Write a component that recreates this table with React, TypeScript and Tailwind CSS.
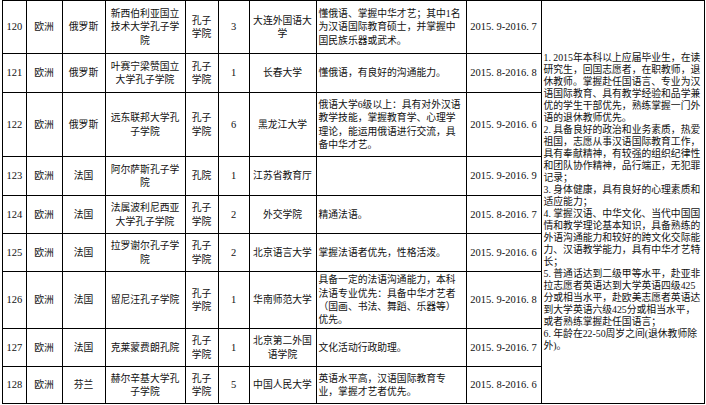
import React from 'react';

type Row = {
    no: string;
    region: string;
    country: string;
    school: string[];
    kind: string[];
    count: string;
    partner: string[];
    req: string[];
    period: string;
    h: string;
};

const rows: Row[] = [
    {
        no: '120', region: '欧洲', country: '俄罗斯',
        school: ['新西伯利亚国立', '技术大学孔子学', '院'], kind: ['孔子', '学院'], count: '3',
        partner: ['大连外国语大', '学'],
        req: ['懂俄语、掌握中华才艺；其中1名', '为汉语国际教育硕士，并掌握中', '国民族乐器或武术。'],
        period: '2015. 9-2016. 7', h: 'h-[53px]',
    },
    {
        no: '121', region: '欧洲', country: '俄罗斯',
        school: ['叶赛宁梁赞国立', '大学孔子学院'], kind: ['孔子', '学院'], count: '1',
        partner: ['长春大学'],
        req: ['懂俄语，有良好的沟通能力。'],
        period: '2015. 8-2016. 8', h: 'h-[39px]',
    },
    {
        no: '122', region: '欧洲', country: '俄罗斯',
        school: ['远东联邦大学孔', '子学院'], kind: ['孔子', '学院'], count: '6',
        partner: ['黑龙江大学'],
        req: ['俄语大学6级以上：具有对外汉语', '教学技能，掌握教育学、心理学', '理论，能运用俄语进行交流，具', '备中华才艺。'],
        period: '2015. 9-2016. 6', h: 'h-[64px]',
    },
    {
        no: '123', region: '欧洲', country: '法国',
        school: ['阿尔萨斯孔子学', '院'], kind: ['孔院'], count: '1',
        partner: ['江苏省教育厅'],
        req: [],
        period: '2015. 9-2016. 9', h: 'h-[39px]',
    },
    {
        no: '124', region: '欧洲', country: '法国',
        school: ['法属波利尼西亚', '大学孔子学院'], kind: ['孔子', '学院'], count: '2',
        partner: ['外交学院'],
        req: ['精通法语。'],
        period: '2015. 8-2016. 7', h: 'h-[38px]',
    },
    {
        no: '125', region: '欧洲', country: '法国',
        school: ['拉罗谢尔孔子学', '院'], kind: ['孔子', '学院'], count: '2',
        partner: ['北京语言大学'],
        req: ['掌握法语者优先，性格活泼。'],
        period: '2015. 9-2016. 6', h: 'h-[38px]',
    },
    {
        no: '126', region: '欧洲', country: '法国',
        school: ['留尼汪孔子学院'], kind: ['孔子', '学院'], count: '1',
        partner: ['华南师范大学'],
        req: ['具备一定的法语沟通能力，本科', '法语专业优先：具备中华才艺者', '（国画、书法、舞蹈、乐器等）', '优先。'],
        period: '2015. 9-2016. 8', h: 'h-[57px]',
    },
    {
        no: '127', region: '欧洲', country: '法国',
        school: ['克莱蒙费朗孔院'], kind: ['孔子', '学院'], count: '1',
        partner: ['北京第二外国', '语学院'],
        req: ['文化活动行政助理。'],
        period: '2015. 9-2016. 7', h: 'h-[38px]',
    },
    {
        no: '128', region: '欧洲', country: '芬兰',
        school: ['赫尔辛基大学孔', '子学院'], kind: ['孔子', '学院'], count: '5',
        partner: ['中国人民大学'],
        req: ['英语水平高，汉语国际教育专', '业，掌握才艺者优先。'],
        period: '2015. 8-2016. 6', h: 'h-[37px]',
    },
];

const general = [
    '1. 2015年本科以上应届毕业生，在读',
    '研究生，回国志愿者，在职教师，退',
    '休教师。掌握赴任国语言、专业为汉',
    '语国际教育、具有教学经验和品学兼',
    '优的学生干部优先，熟练掌握一门外',
    '语的退休教师优先。',
    '2. 具备良好的政治和业务素质，热爱',
    '祖国，志愿从事汉语国际教育工作，',
    '具有奉献精神，有较强的组织纪律性',
    '和团队协作精神，品行端正，无犯罪',
    '记录；',
    '3. 身体健康，具有良好的心理素质和',
    '适应能力；',
    '4. 掌握汉语、中华文化、当代中国国',
    '情和教学理论基本知识，具备熟练的',
    '外语沟通能力和较好的跨文化交际能',
    '力、汉语教学能力，具有中华才艺特',
    '长；',
    '5. 普通话达到二级甲等水平，赴亚非',
    '拉志愿者英语达到大学英语四级425',
    '分或相当水平，赴欧美志愿者英语达',
    '到大学英语六级425分或相当水平，',
    '或者熟练掌握赴任国语言；',
    '6. 年龄在22-50周岁之间(退休教师除',
    '外)。',
];

function Lines({ items }: { items: string[] }) {
    return (
        <>
            {items.map((t, i) => (
                <div key={i} className="whitespace-nowrap">{t}</div>
            ))}
        </>
    );
}

const cell = 'border-y-[1.5px] border-x-[1.5px] border-black align-middle p-0';

export default function App() {
    return (
        <div className="bg-white w-[706px] h-[405px] overflow-hidden pl-[2px]">
            <table className="table-fixed border-collapse w-[702px] text-[9.8px] leading-[13.3px] text-[#111] font-['Liberation_Serif',_'Noto_Sans_CJK_SC',_serif]">
                <colgroup>
                    <col className="w-[23.5px]" />
                    <col className="w-[36px]" />
                    <col className="w-[43px]" />
                    <col className="w-[80px]" />
                    <col className="w-[33px]" />
                    <col className="w-[31px]" />
                    <col className="w-[67px]" />
                    <col className="w-[150px]" />
                    <col className="w-[75px]" />
                    <col className="w-[163px]" />
                </colgroup>
                <tbody>
                    {rows.map((r, idx) => (
                        <tr key={r.no} className={r.h}>
                            <td className={`${cell} text-center text-[10.5px]`}>{r.no}</td>
                            <td className={`${cell} text-center`}>{r.region}</td>
                            <td className={`${cell} text-center`}>{r.country}</td>
                            <td className={`${cell} text-center`}><Lines items={r.school} /></td>
                            <td className={`${cell} text-center`}><Lines items={r.kind} /></td>
                            <td className={`${cell} text-center text-[10.5px]`}>{r.count}</td>
                            <td className={`${cell} text-center`}><Lines items={r.partner} /></td>
                            <td className={`${cell} pl-[2px] text-left`}><Lines items={r.req} /></td>
                            <td className={`${cell} text-center text-[10.5px]`}>{r.period}</td>
                            {idx === 0 && (
                                <td rowSpan={rows.length} className={`${cell} pl-[2px] text-left leading-[12px]`}>
                                    <Lines items={general} />
                                </td>
                            )}
                        </tr>
                    ))}
                </tbody>
            </table>
        </div>
    );
}
